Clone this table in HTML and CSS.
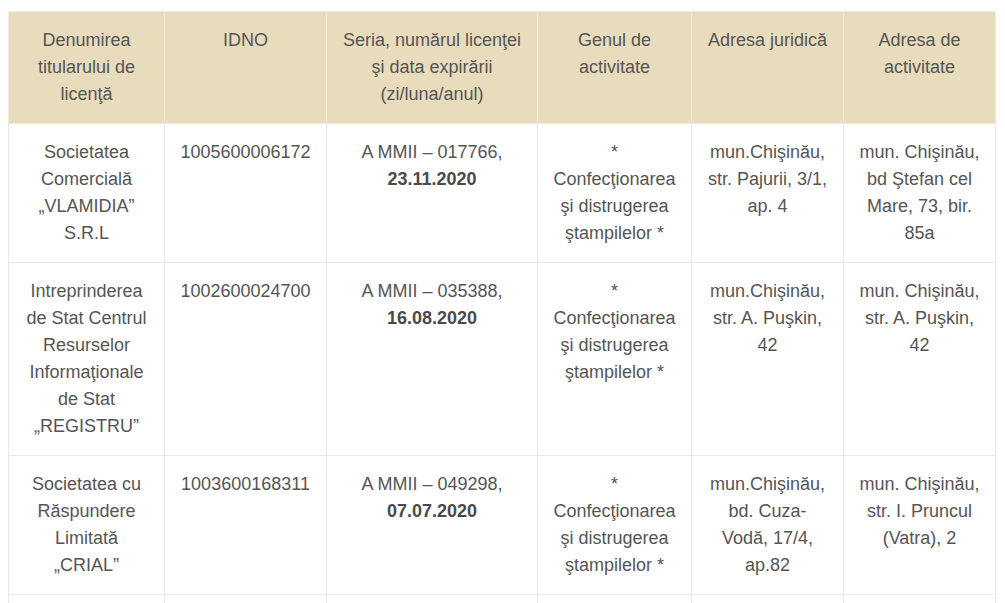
FILE: index.html
```html
<!DOCTYPE html>
<html lang="ro">
<head>
<meta charset="utf-8">
<title>Licenţe</title>
<link rel="stylesheet" href="styles.css">
</head>
<body>
<table class="lic-table">
  <colgroup>
    <col class="c1"><col class="c2"><col class="c3"><col class="c4"><col class="c5"><col class="c6">
  </colgroup>
  <thead>
    <tr>
      <th>Denumirea titularului de licenţă</th>
      <th>IDNO</th>
      <th>Seria, numărul licenţei şi data expirării (zi/luna/anul)</th>
      <th>Genul de activitate</th>
      <th>Adresa juridică</th>
      <th>Adresa de activitate</th>
    </tr>
  </thead>
  <tbody>
    <tr>
      <td>Societatea Comercială „VLAMIDIA” S.R.L</td>
      <td>1005600006172</td>
      <td>A MMII – 017766, <strong>23.11.2020</strong></td>
      <td>* Confecţionarea şi distrugerea ştampilelor *</td>
      <td>mun.Chişinău, str. Pajurii, 3/1, ap. 4</td>
      <td>mun. Chişinău, bd Ştefan cel Mare, 73, bir. 85a</td>
    </tr>
    <tr>
      <td>Intreprinderea de Stat Centrul Resurselor Informaţionale de Stat „REGISTRU”</td>
      <td>1002600024700</td>
      <td>A MMII – 035388, <strong>16.08.2020</strong></td>
      <td>* Confecţionarea şi distrugerea ştampilelor *</td>
      <td>mun.Chişinău, str. A. Puşkin, 42</td>
      <td>mun. Chişinău, str. A. Puşkin, 42</td>
    </tr>
    <tr>
      <td>Societatea cu Răspundere Limitată „CRIAL”</td>
      <td>1003600168311</td>
      <td>A MMII – 049298, <strong>07.07.2020</strong></td>
      <td>* Confecţionarea şi distrugerea ştampilelor *</td>
      <td>mun.Chişinău, bd. Cuza-Vodă, 17/4, ap.82</td>
      <td>mun. Chişinău, str. I. Pruncul (Vatra), 2</td>
    </tr>
    <tr class="row-empty">
      <td></td><td></td><td></td><td></td><td></td><td></td>
    </tr>
  </tbody>
</table>
</body>
</html>
```

FILE: styles.css
```css
html, body {
  background: #ffffff;
}
body {
  margin: 0;
  padding: 11px 8px 0 8px;
  font-family: "Liberation Sans", Arial, sans-serif;
  font-size: 18px;
  line-height: 1.5;
  color: #555555;
}
.lic-table {
  width: 987px;
  table-layout: fixed;
  border-collapse: collapse;
  border-spacing: 0;
}
.c1 { width: 156px; }
.c2 { width: 162px; }
.c3 { width: 211px; }
.c4 { width: 154px; }
.c5 { width: 152px; }
.c6 { width: 152px; }
.lic-table th,
.lic-table td {
  padding: 15px 15px;
  text-align: center;
  vertical-align: top;
  border: 1px solid #e8e8e8;
}
.lic-table th {
  background: #e8dcbd;
  font-weight: normal;
  border-color: #f1ebdc;
  border-top-color: #eeeeee;
}
.lic-table thead th {
  border-bottom: 1px solid #e8e8e8;
}
.lic-table .row-empty td {
  height: 27px;
}
.lic-table strong {
  font-weight: bold;
  color: #4a4a4a;
}
```
